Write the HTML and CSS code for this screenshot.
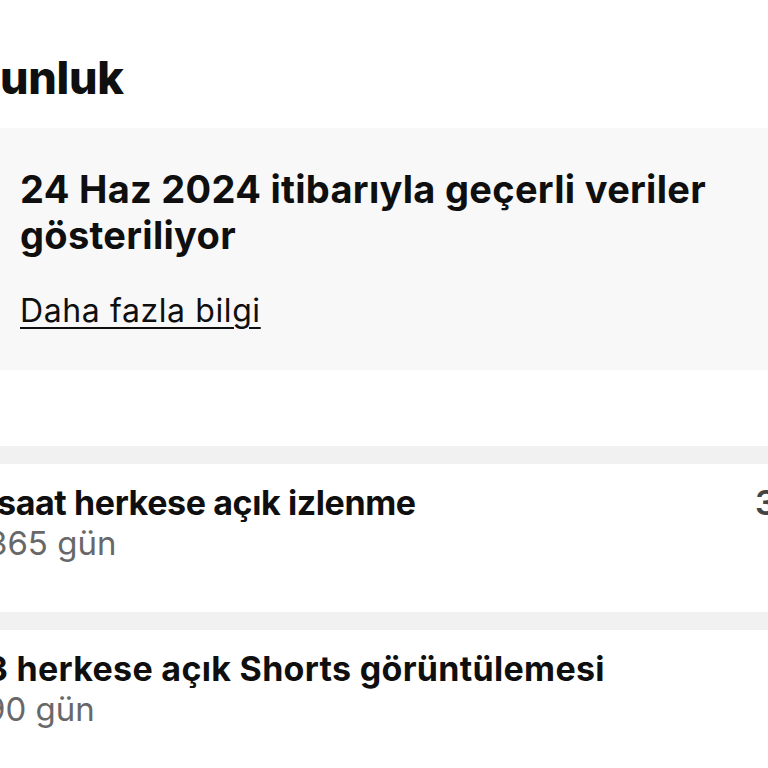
FILE: index.html
```html
<!DOCTYPE html>
<html lang="tr">
<head>
<meta charset="utf-8">
<title>Uygunluk</title>
<link rel="stylesheet" href="styles.css">
</head>
<body>
<div class="page">
  <h1 class="heading">unluk</h1>
  <section class="notice">
    <p class="notice-title">24 Haz 2024 itibarıyla geçerli veriler gösteriliyor</p>
    <a class="notice-link" href="#">Daha fazla bilgi</a>
  </section>
  <div class="gap"></div>
  <div class="band"></div>
  <div class="row">
    <div class="row-text">
      <div class="row-title row-title--first">saat herkese açık izlenme</div>
      <div class="row-sub row-sub--first">365 gün</div>
    </div>
    <div class="row-value">3.000</div>
  </div>
  <div class="band"></div>
  <div class="row">
    <div class="row-text">
      <div class="row-title row-title--second">3 herkese açık Shorts görüntülemesi</div>
      <div class="row-sub row-sub--second">90 gün</div>
    </div>
  </div>
</div>
</body>
</html>
```

FILE: styles.css
```css
* { box-sizing: border-box; }
html, body {
  margin: 0;
  padding: 0;
  background: #ffffff;
}
body {
  font-family: Inter, "Noto Sans", sans-serif;
  color: #0f0f0f;
  overflow: hidden;
  width: 768px;
  height: 768px;
}
.page {
  width: 768px;
  height: 768px;
  overflow: hidden;
  display: flex;
  flex-direction: column;
}
.heading {
  margin: 54px 0 0 0;
  font-size: 45px;
  line-height: 48px;
  font-weight: 800;
  letter-spacing: -0.3px;
  height: 74px;
}
.notice {
  background: #f8f8f8;
  padding: 38px 20px 39px 20px;
  display: flex;
  flex-direction: column;
  align-items: flex-start;
}
.notice-title {
  margin: 0;
  font-size: 38px;
  line-height: 46px;
  font-weight: 700;
  letter-spacing: 0.3px;
  max-width: 728px;
}
.notice-link {
  margin-top: 33px;
  font-size: 32px;
  line-height: 40px;
  color: #0f0f0f;
  text-decoration: underline;
  text-decoration-thickness: 2px;
  text-underline-offset: 5px;
  letter-spacing: 0.6px;
}
.gap { height: 76px; flex: none; }
.band {
  height: 18px;
  flex: none;
  background: #f1f1f1;
}
.row {
  display: flex;
  justify-content: space-between;
  align-items: flex-start;
  height: 148px;
  flex: none;
  padding-top: 19px;
}
.row:last-child { height: auto; flex: 1; }
.row-text {
  display: flex;
  flex-direction: column;
  min-width: 0;
}
.row-title {
  font-size: 34px;
  line-height: 40px;
  font-weight: 700;
  white-space: nowrap;
}
.row-title--first { margin-left: -3px; letter-spacing: -0.4px; }
.row-title--second { margin-left: -14px; letter-spacing: 0.3px; }
.row-sub {
  margin-top: 3px;
  font-size: 33px;
  line-height: 34px;
  color: #686868;
  white-space: nowrap;
}
.row-sub--first { margin-left: -13px; }
.row-sub--second { margin-left: -15px; }
.row-value {
  width: 13px;
  flex: none;
  white-space: nowrap;
  font-size: 34px;
  line-height: 40px;
  font-weight: 600;
  color: #444444;
}
```
